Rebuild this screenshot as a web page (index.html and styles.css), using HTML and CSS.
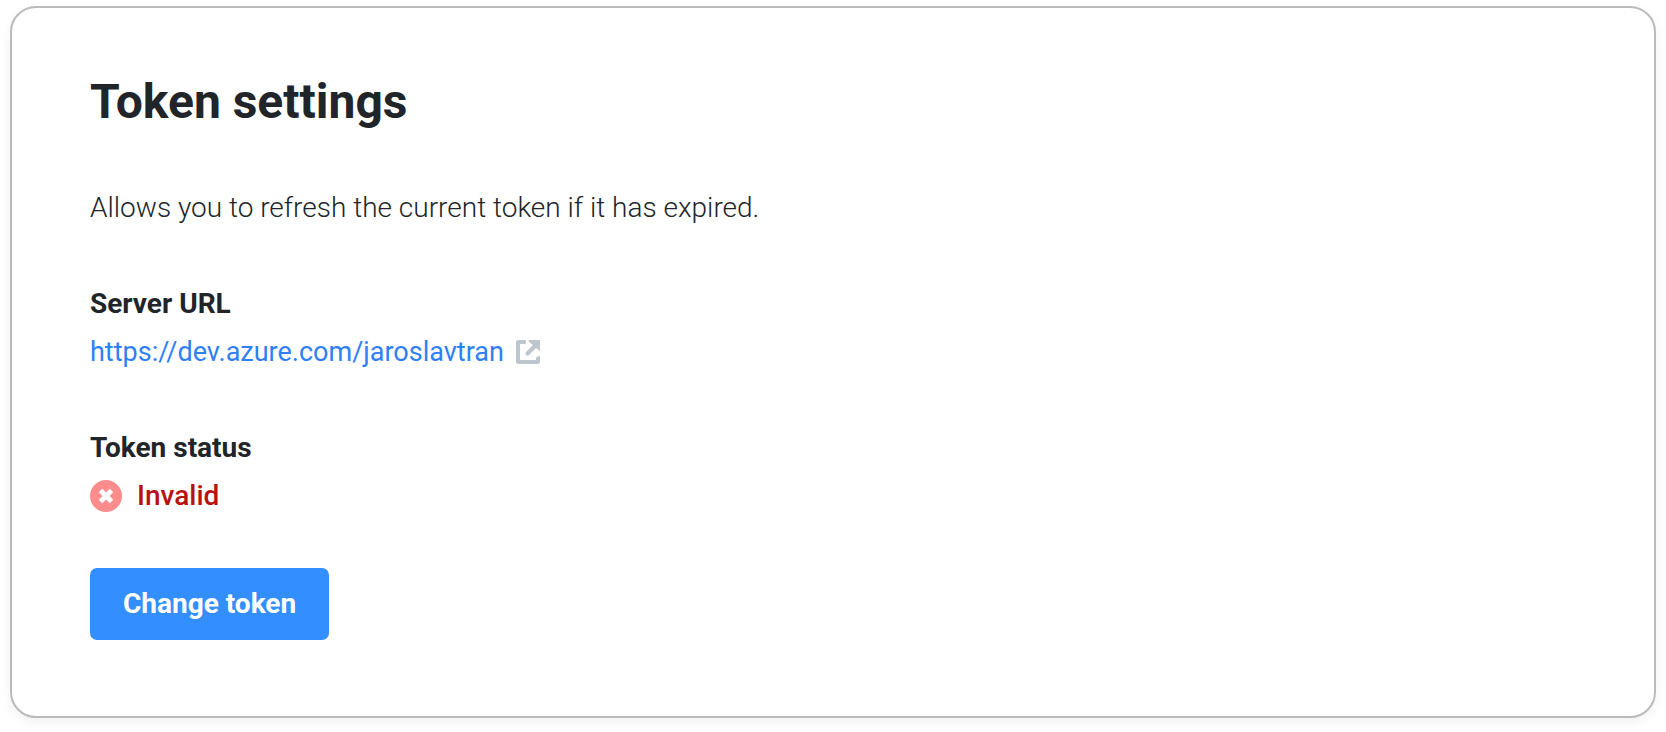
FILE: index.html
```html
<!DOCTYPE html>
<html lang="en">
<head>
    <meta charset="UTF-8">
    <meta name="viewport" content="width=device-width, initial-scale=1.0">
    <title>Token settings</title>
    <link rel="stylesheet" href="styles.css">
</head>
<body>
    <main class="card">
        <h1>Token settings</h1>
        <p class="description">Allows you to refresh the current token if it has expired.</p>

        <section class="field">
            <h2>Server URL</h2>
            <a class="server-link" href="https://dev.azure.com/jaroslavtran">
                <span>https://dev.azure.com/jaroslavtran</span>
                <svg class="link-icon" viewBox="0 0 24 24" aria-hidden="true">
                    <path d="M9 0H2a2 2 0 0 0-2 2v20a2 2 0 0 0 2 2h20a2 2 0 0 0 2-2v-5q0-1-1-1l-2 1q-1 .5-1 1v2H4V4h5q1 0 1-2T9 0z"/>
                    <path d="M13 0h10q1 0 1 1v10l-4-3-7 7q-2 1-3 0t0-3l7-7-4-3q-1-2 0-2z"/>
                </svg>
            </a>
        </section>

        <section class="field">
            <h2>Token status</h2>
            <p class="status">
                <svg class="status-icon" viewBox="0 0 32 32" aria-hidden="true">
                    <circle cx="16" cy="16" r="16"/>
                    <path d="M10.5 10.5l11 11M21.5 10.5l-11 11"/>
                </svg>
                <span>Invalid</span>
            </p>
        </section>

        <button class="change-button" type="button">Change token</button>
    </main>
</body>
</html>
```

FILE: styles.css
```css
* {
    box-sizing: border-box;
}

body {
    background-color: #fff;
    font-family: Roboto, sans-serif;
    font-size: 28px;
    line-height: 48px;
    color: #212529;
    margin: 0;
    padding: 6px 10px 14px;
}

.card {
    padding: 68px 78px 76px;
    background: #fff;
    border: 2px solid #bbb;
    border-radius: 26px;
    box-shadow: 0 4px 12px rgba(0, 0, 0, 0.06);
}

h1,
h2,
p {
    margin: 0;
}

h1 {
    font-size: 48px;
    font-weight: 700;
    line-height: 52px;
}

h2 {
    font-size: 28px;
    font-weight: 700;
    line-height: 48px;
}

.description {
    margin-top: 56px;
    font-weight: 300;
}

.field {
    margin-top: 48px;
}

.server-link {
    display: inline-flex;
    align-items: center;
    gap: 12px;
    color: #2f80f7;
    font-size: 27px;
    text-decoration: none;
    vertical-align: top;
}

.link-icon {
    width: 24px;
    height: 24px;
    fill: #bdc5cd;
}

.status {
    display: flex;
    align-items: center;
    gap: 15px;
    color: #b81111;
    font-weight: 500;
}

.status-icon {
    width: 32px;
    height: 32px;
    fill: #ff8c8c;
}

.status-icon path {
    stroke: #fff;
    stroke-width: 5;
}

.change-button {
    display: block;
    margin-top: 48px;
    padding: 12px 33px;
    border: none;
    border-radius: 7px;
    background-color: #338fff;
    color: #fff;
    font: inherit;
    font-weight: 700;
    cursor: pointer;
}

.change-button:hover {
    background-color: #1f7af0;
}
```
